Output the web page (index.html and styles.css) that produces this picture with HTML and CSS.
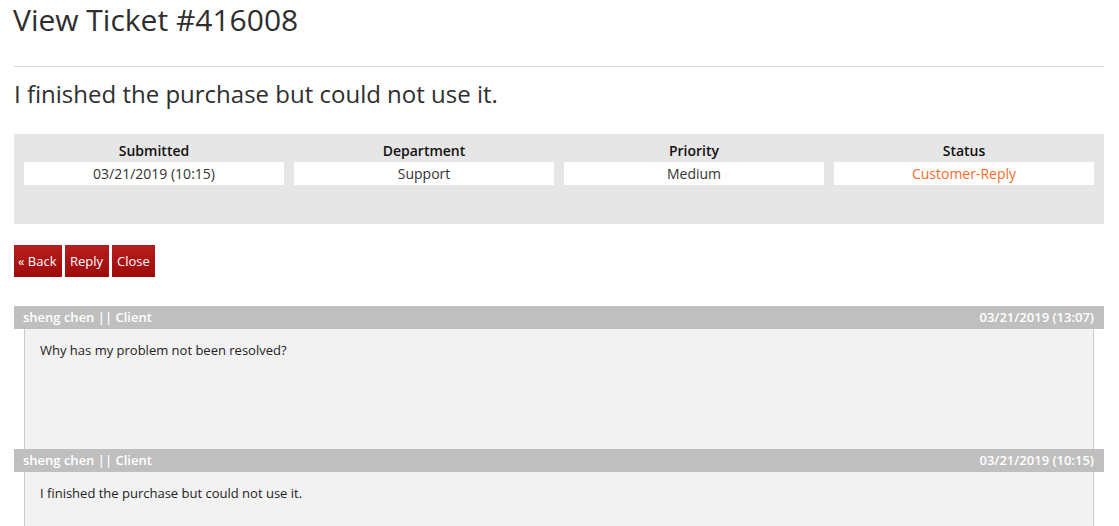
FILE: index.html
```html
<!DOCTYPE html>
<html lang="en">
<head>
<meta charset="utf-8">
<title>View Ticket #416008</title>
<link rel="stylesheet" href="styles.css">
</head>
<body>
<div class="page">
  <h1 class="page-title">View Ticket #416008</h1>
  <hr class="divider">
  <h2 class="ticket-subject">I finished the purchase but could not use it.</h2>

  <div class="ticket-info">
    <div class="info-col">
      <div class="info-label">Submitted</div>
      <div class="info-value">03/21/2019 (10:15)</div>
    </div>
    <div class="info-col">
      <div class="info-label">Department</div>
      <div class="info-value">Support</div>
    </div>
    <div class="info-col">
      <div class="info-label">Priority</div>
      <div class="info-value">Medium</div>
    </div>
    <div class="info-col">
      <div class="info-label">Status</div>
      <div class="info-value status-reply">Customer-Reply</div>
    </div>
  </div>

  <div class="actions">
    <button class="btn btn-back" type="button">&laquo; Back</button>
    <button class="btn" type="button">Reply</button>
    <button class="btn" type="button">Close</button>
  </div>

  <div class="message">
    <div class="message-head">
      <span class="message-author">sheng chen || Client</span>
      <span class="message-date">03/21/2019 (13:07)</span>
    </div>
    <div class="message-body">Why has my problem not been resolved?</div>
  </div>

  <div class="message">
    <div class="message-head">
      <span class="message-author">sheng chen || Client</span>
      <span class="message-date">03/21/2019 (10:15)</span>
    </div>
    <div class="message-body">I finished the purchase but could not use it.</div>
  </div>
</div>
</body>
</html>
```

FILE: styles.css
```css
* {
  box-sizing: border-box;
}

html, body {
  margin: 0;
  padding: 0;
  background: #ffffff;
}

body {
  font-family: "Open Sans", "Liberation Sans", sans-serif;
  color: #333333;
  font-size: 13px;
}

.page {
  padding: 0 15px 0 14px;
}

.page-title {
  margin: 0 0 0 -1px;
  font-size: 30px;
  font-weight: 400;
  line-height: 40px;
  color: #2e2e2e;
}

.divider {
  margin: 26px 0 0;
  border: 0;
  border-top: 1px solid #dcdcdc;
  height: 0;
}

.ticket-subject {
  margin: 11px 0 0;
  font-size: 24px;
  font-weight: 400;
  line-height: 32px;
  color: #2e2e2e;
}

.ticket-info {
  margin-top: 24px;
  background: #e6e6e6;
  padding: 7px 10px 39px;
  display: grid;
  grid-template-columns: repeat(4, 1fr);
  column-gap: 10px;
}

.info-col {
  display: flex;
  flex-direction: column;
  text-align: center;
}

.info-label {
  font-size: 14px;
  font-weight: 600;
  line-height: 19px;
  padding-bottom: 2px;
  color: #111111;
}

.info-value {
  background: #ffffff;
  font-size: 14px;
  line-height: 23px;
  color: #333333;
}

.status-reply {
  color: #ff6a2b;
}

.actions {
  margin-top: 21px;
  display: flex;
  gap: 3px;
}

.btn {
  font-family: "Open Sans", "Liberation Sans", sans-serif;
  font-size: 13px;
  line-height: 32px;
  height: 32px;
  padding: 0 5.5px;
  border: 0;
  color: #ffffff;
  background: linear-gradient(to bottom, #b81e1e, #9e0a0a);
  cursor: pointer;
}

.btn-back {
  padding: 0 5px 0 4px;
}

.message-head {
  display: flex;
  justify-content: space-between;
  background: #bfbfbf;
  color: #ffffff;
  font-weight: 600;
  font-size: 13px;
  line-height: 23px;
  height: 23px;
  padding: 0 10px 0 9px;
}

.actions + .message {
  margin-top: 29px;
}

.message-body {
  margin: 0 10px;
  background: #f2f2f2;
  border-left: 1px solid #cccccc;
  border-right: 1px solid #cccccc;
  min-height: 120px;
  padding: 11px 15px 13px;
  line-height: 20px;
  color: #222222;
}
```
